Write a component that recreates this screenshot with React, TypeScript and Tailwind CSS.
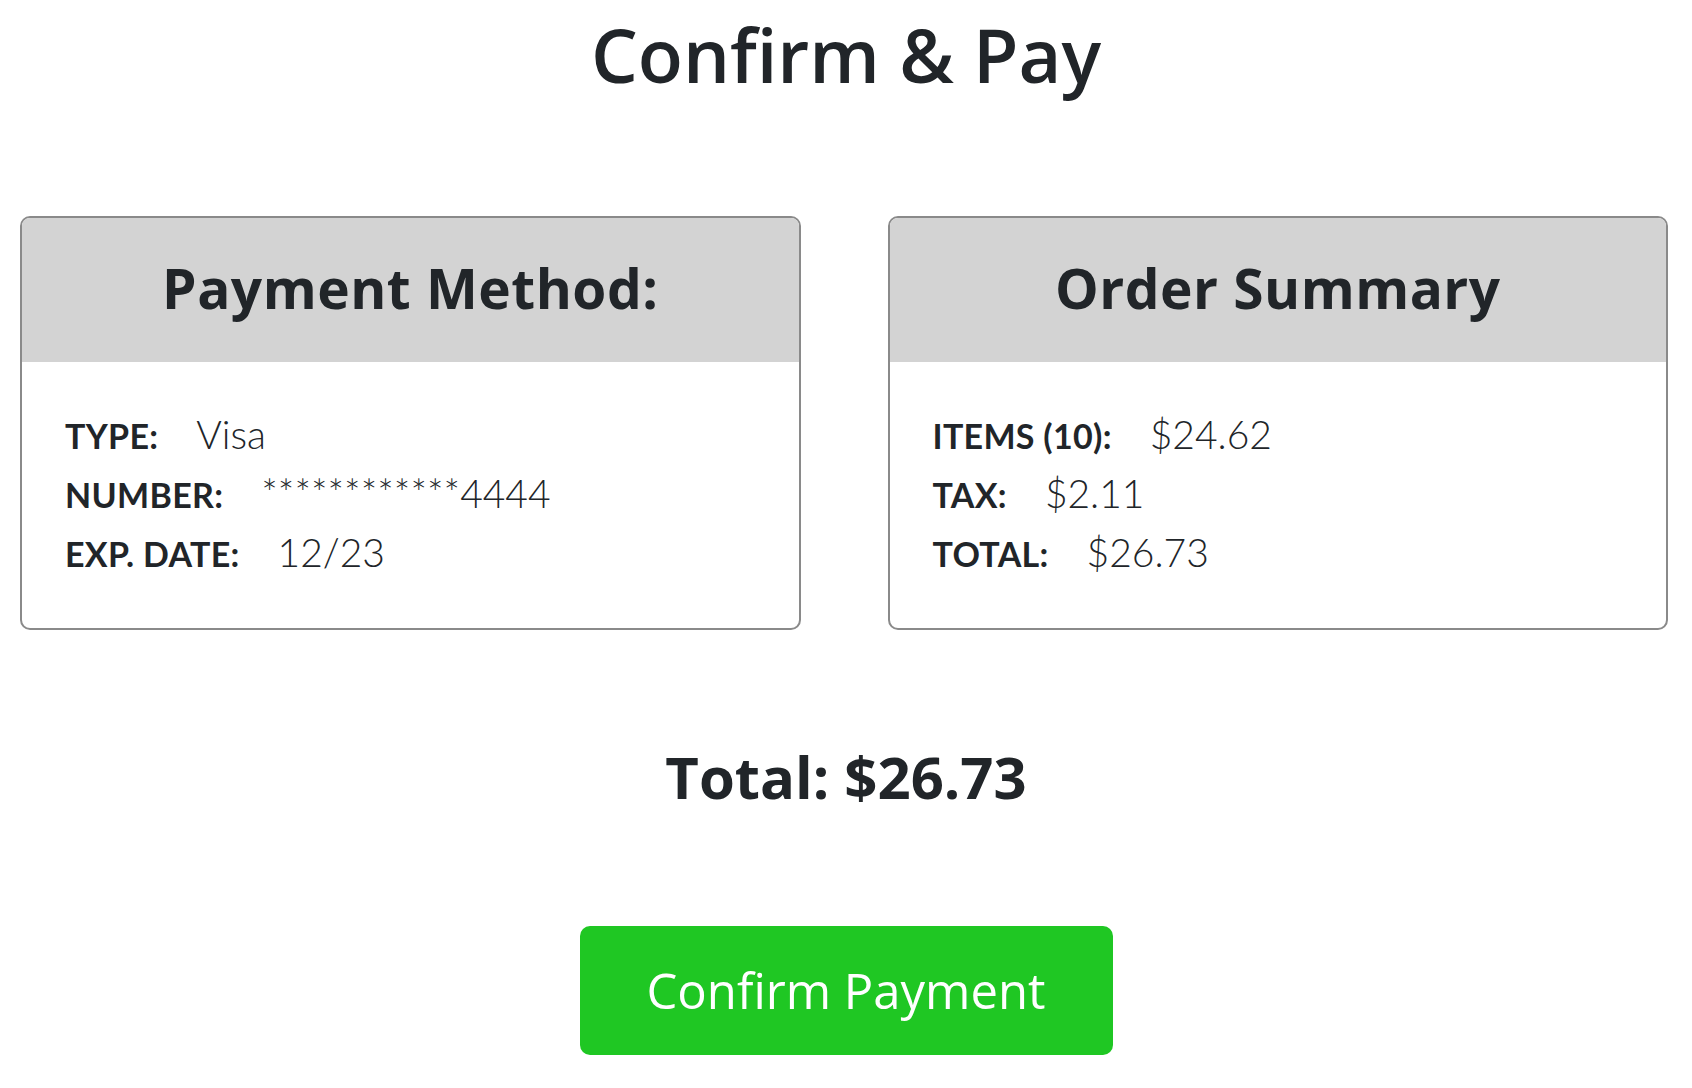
import React from "react";

type Row = { label: string; value: string };

const paymentRows: Row[] = [
  { label: "TYPE:", value: "Visa" },
  { label: "NUMBER:", value: "************4444" },
  { label: "EXP. DATE:", value: "12/23" },
];

const summaryRows: Row[] = [
  { label: "ITEMS (10):", value: "$24.62" },
  { label: "TAX:", value: "$2.11" },
  { label: "TOTAL:", value: "$26.73" },
];

const headingFont = "[font-family:'Open_Sans',sans-serif]";

function InfoCard({ title, rows }: { title: string; rows: Row[] }) {
  return (
    <div className="flex-1 overflow-hidden rounded-[10px] border-2 border-[#8a8a8a] bg-white">
      <div className="flex h-[144px] items-center justify-center bg-[#d3d3d3] pb-[3px]">
        <h2 className={`${headingFont} text-[55px] font-bold tracking-[0.5px] text-[#212529]`}>
          {title}
        </h2>
      </div>
      <div className="flex flex-col px-[43px] pt-[43px] pb-[46px] font-['Lato',sans-serif] text-[#212529]">
        {rows.map((row) => (
          <div key={row.label} className="flex h-[59px] items-baseline leading-[59px]">
            <span className="mr-[38px] text-[34px] font-bold tracking-[0.3px]">{row.label}</span>
            <span className="text-[39px] font-light">{row.value}</span>
          </div>
        ))}
      </div>
    </div>
  );
}

export default function App() {
  return (
    <div className="min-h-[1088px] bg-white text-[#212529]">
      <h1
        className={`${headingFont} pt-[11px] text-center text-[74px] font-semibold leading-[88px]`}
      >
        Confirm &amp; Pay
      </h1>
      <div className="mt-[117px] flex gap-[87px] pl-[20px] pr-[24px]">
        <InfoCard title="Payment Method:" rows={paymentRows} />
        <InfoCard title="Order Summary" rows={summaryRows} />
      </div>
      <div
        className={`${headingFont} mt-[112px] text-center text-[58px] font-bold leading-[70px]`}
      >
        Total: $26.73
      </div>
      <div className="mt-[114px] flex justify-center">
        <button className="flex h-[129px] w-[533px] items-center justify-center rounded-[10px] bg-[#1fc723] font-['Open_Sans',sans-serif] text-[49px] font-medium text-white">
          Confirm Payment
        </button>
      </div>
    </div>
  );
}
